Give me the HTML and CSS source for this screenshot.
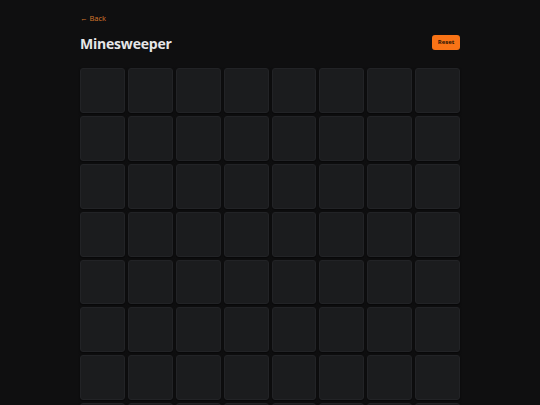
FILE: index.html
```html
<!DOCTYPE html>
<html lang="en">
<head>
<meta charset="utf-8">
<title>Minesweeper</title>
<link rel="stylesheet" href="styles.css">
</head>
<body>
<main class="page">
  <a class="back" href="#">← Back</a>
  <header class="header">
    <h1 class="title">Minesweeper</h1>
    <button class="reset" type="button">Reset</button>
  </header>
  <section class="board" id="board"></section>
</main>
<script src="app.js"></script>
</body>
</html>
```
FILE: styles.css
```css
* { box-sizing: border-box; }
html, body { margin: 0; padding: 0; }
body {
  background: #0f0f10;
  font-family: "Open Sans", "Noto Sans", sans-serif;
  color: #e8e8ea;
  height: 405px;
  overflow: hidden;
}
.page {
  width: 380px;
  margin: 0 auto;
  padding-top: 13px;
}
.back {
  display: block;
  font-size: 7.5px;
  line-height: 10px;
  color: #d8782c;
  text-decoration: none;
}
.header {
  display: flex;
  align-items: center;
  justify-content: space-between;
  margin-top: 10px;
  height: 22px;
}
.title {
  margin: 0;
  font-size: 14px;
  font-weight: 700;
  letter-spacing: -0.015em;
  color: #e6e6e8;
  line-height: 22px;
}
.reset {
  width: 28px;
  height: 15px;
  border: none;
  border-radius: 3px;
  background: #f97316;
  color: #2a1306;
  font-family: "Open Sans", sans-serif;
  font-weight: 700;
  font-size: 6px;
  padding: 0;
  margin-top: -4px;
}
.board {
  margin-top: 13px;
  display: grid;
  grid-template-columns: repeat(8, 1fr);
  gap: 3px;
}
.cell {
  aspect-ratio: 1 / 1;
  background: #1b1c1e;
  border: 1px solid #222326;
  border-radius: 3px;
  box-shadow: 0 1px 2px rgba(0,0,0,0.6);
}
```
FILE: app.js
```js
const board = document.getElementById('board');
for (let i = 0; i < 64; i++) {
  const c = document.createElement('div');
  c.className = 'cell';
  board.appendChild(c);
}
```
